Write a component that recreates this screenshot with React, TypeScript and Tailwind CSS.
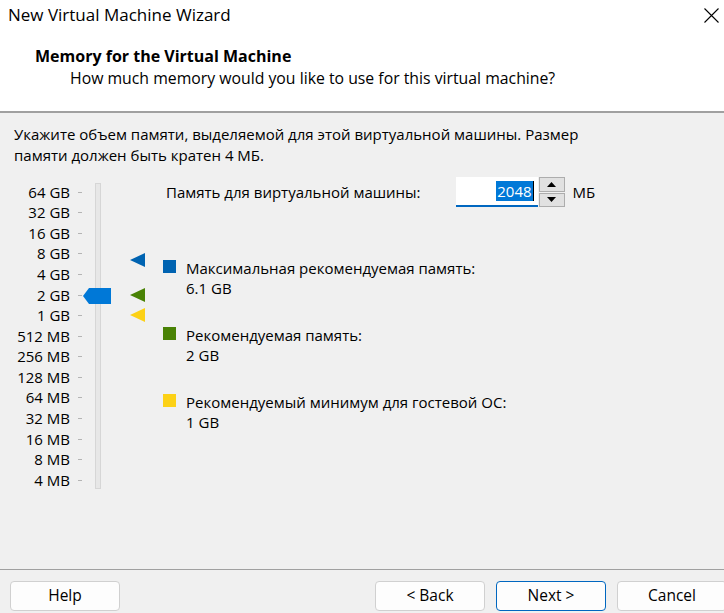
import React from "react";

const scaleLabels = [
  "64 GB", "32 GB", "16 GB", "8 GB", "4 GB", "2 GB", "1 GB",
  "512 MB", "256 MB", "128 MB", "64 MB", "32 MB", "16 MB", "8 MB", "4 MB",
];

function Triangle({ color, className }: { color: string; className: string }) {
  return (
    <svg className={`absolute ${className}`} width="15" height="14" viewBox="0 0 15 14">
      <polygon points="0,7 15,0 15,14" fill={color} />
    </svg>
  );
}

function MemoryScale() {
  return (
    <div className="relative flex h-[320px] w-[150px]">
      {/* labels */}
      <div className="flex w-[70px] flex-col items-end pt-[5px]">
        {scaleLabels.map((l) => (
          <div key={l} className="flex h-[20.57px] items-center leading-none">
            {l}
          </div>
        ))}
      </div>
      {/* ticks */}
      <div className="ml-[8px] flex w-[4px] flex-col pt-[5px]">
        {scaleLabels.map((l) => (
          <div key={l} className="flex h-[20.57px] items-center">
            <div className="h-px w-[4px] bg-[#b4b4b4]" />
          </div>
        ))}
      </div>
      {/* track */}
      <div className="ml-[13px] mt-[6px] h-[306px] w-[6px] border border-[#d6d6d6] bg-[#e7e7e7]" />
      {/* thumb */}
      <svg className="absolute left-[83px] top-[111px]" width="28" height="16" viewBox="0 0 28 16">
        <polygon points="0,8 6,0 28,0 28,16 6,16" fill="#0078d7" />
      </svg>
      <Triangle color="#0063b1" className="left-[130px] top-[76px]" />
      <Triangle color="#498205" className="left-[130px] top-[111px]" />
      <Triangle color="#fcd116" className="left-[130px] top-[131px]" />
    </div>
  );
}

function LegendItem({ color, title, value }: { color: string; title: string; value: string }) {
  return (
    <div className="flex">
      <div className={`mt-[-2px] h-[13px] w-[13px] ${color}`} />
      <div className="ml-[10px] flex flex-col leading-[20px]">
        <span className="-mt-[4px]">{title}</span>
        <span>{value}</span>
      </div>
    </div>
  );
}

function WizardButton({ label, primary }: { label: string; primary?: boolean }) {
  return (
    <button
      className={`h-[30px] w-[110px] rounded-[4px] border bg-[#fdfdfd] text-[15.5px] ${
        primary ? "border-[#0067c0]" : "border-[#d0d0d0]"
      }`}
    >
      {label}
    </button>
  );
}

export default function App() {
  return (
    <div className="flex h-[613px] w-[724px] flex-col overflow-hidden bg-[#f0f0f0] font-['Open_Sans',sans-serif] text-[15px] text-black">
      {/* Header */}
      <div className="h-[111px] bg-white">
        <div className="flex h-[30px] items-center justify-between pl-[8px] pr-[5px]">
          <span className="text-[17px]">New Virtual Machine Wizard</span>
          <svg width="15" height="15" viewBox="0 0 15 15">
            <path d="M0.5 0.5 L14.5 14.5 M14.5 0.5 L0.5 14.5" stroke="#000" strokeWidth="1.1" />
          </svg>
        </div>
        <div className="pl-[35px] pt-[15px] text-[16px] font-bold leading-[22px]">Memory for the Virtual Machine</div>
        <div className="pl-[70px] text-[15.8px] leading-[22px]">How much memory would you like to use for this virtual machine?</div>
      </div>
      <div className="h-[2px] bg-[#a0a0a0]" />

      {/* Body */}
      <div className="flex-1 px-[14px] pt-[11px]">
        <p className="leading-[21px]">
          Укажите объем памяти, выделяемой для этой виртуальной машины. Размер
          <br />
          памяти должен быть кратен 4 МБ.
        </p>
        <div className="mt-[11px] flex">
          <div className="-ml-[14px]">
            <MemoryScale />
          </div>
          <div className="ml-[16px] flex flex-col">
            <div className="flex items-center">
              <span className="mr-[35px]">Память для виртуальной машины:</span>
              <div className="flex h-[30px] w-[82px] items-center justify-end border-b-2 border-[#0067c0] bg-white pr-[4px]">
                <span className="bg-[#0078d7] px-px leading-[20px] text-white">2048</span>
                <span className="h-[20px] w-px bg-black" />
              </div>
              <div className="ml-[1px] flex h-[30px] w-[26px] flex-col gap-px">
                <div className="flex flex-1 items-center justify-center border border-[#adadad] bg-[#e1e1e1]">
                  <svg width="9" height="5" viewBox="0 0 9 5"><polygon points="0,5 4.5,0 9,5" fill="#000" /></svg>
                </div>
                <div className="flex flex-1 items-center justify-center border border-[#adadad] bg-[#e1e1e1]">
                  <svg width="9" height="5" viewBox="0 0 9 5"><polygon points="0,0 9,0 4.5,5" fill="#000" /></svg>
                </div>
              </div>
              <span className="ml-[8px]">МБ</span>
            </div>
            <div className="ml-[-3px] mt-[55px] flex flex-col gap-[31px]">
              <LegendItem color="bg-[#0063b1]" title="Максимальная рекомендуемая память:" value="6.1 GB" />
              <LegendItem color="bg-[#498205]" title="Рекомендуемая память:" value="2 GB" />
              <LegendItem color="bg-[#fcd116]" title="Рекомендуемый минимум для гостевой ОС:" value="1 GB" />
            </div>
          </div>
        </div>
      </div>

      {/* Footer */}
      <div className="h-px bg-[#a0a0a0]" />
      <div className="flex h-[43px] items-start pl-[10px] pt-[11px]">
        <WizardButton label="Help" />
        <div className="-mr-[3px] ml-auto flex gap-[11px]">
          <WizardButton label="< Back" />
          <WizardButton label="Next >" primary />
          <WizardButton label="Cancel" />
        </div>
      </div>
    </div>
  );
}
